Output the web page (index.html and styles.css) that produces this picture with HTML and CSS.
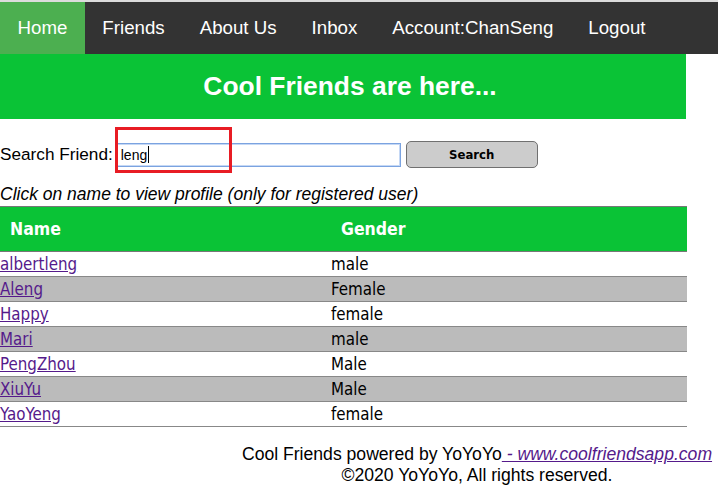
FILE: index.html
```html
<!DOCTYPE html>
<html>
<head>
<meta charset="utf-8">
<link rel="stylesheet" href="styles.css">
</head>
<body>
<ul class="nav">
  <li class="nav-item active">Home</li>
  <li class="nav-item">Friends</li>
  <li class="nav-item">About Us</li>
  <li class="nav-item">Inbox</li>
  <li class="nav-item">Account:ChanSeng</li>
  <li class="nav-item">Logout</li>
</ul>
<div class="banner"><h1 class="banner-title">Cool Friends are here...</h1></div>
<div class="search">
  <label class="search-label">Search Friend:</label>
  <div class="search-input">leng<span class="caret"></span></div>
  <button class="search-btn">Search</button>
  <div class="highlight"></div>
</div>
<p class="hint">Click on name to view profile (only for registered user)</p>
<table class="friends">
  <thead>
    <tr><th class="col-name">Name</th><th>Gender</th></tr>
  </thead>
  <tbody>
    <tr><td><a href="#">albertleng</a></td><td>male</td></tr>
    <tr class="alt"><td><a href="#">Aleng</a></td><td>Female</td></tr>
    <tr><td><a href="#">Happy</a></td><td>female</td></tr>
    <tr class="alt"><td><a href="#">Mari</a></td><td>male</td></tr>
    <tr><td><a href="#">PengZhou</a></td><td>Male</td></tr>
    <tr class="alt"><td><a href="#">XiuYu</a></td><td>Male</td></tr>
    <tr><td><a href="#">YaoYeng</a></td><td>female</td></tr>
  </tbody>
</table>
<footer class="footer">
  <div>Cool Friends powered by YoYoYo<a href="#" class="footer-link"> - www.coolfriendsapp.com</a></div>
  <div>©2020 YoYoYo, All rights reserved.</div>
</footer>
</body>
</html>
```

FILE: styles.css
```css
html, body {
  margin: 0;
  padding: 0;
  background: #fff;
}
body {
  font-family: "Liberation Sans", Arial, sans-serif;
  color: #000;
  border-top: 2px solid #dcdcdc;
}
.nav {
  list-style: none;
  margin: 0;
  padding: 0;
  display: flex;
  background: #333;
  height: 52px;
}
.nav-item {
  color: #fff;
  font-size: 18.7px;
  line-height: 52px;
  padding: 0 17.5px;
}
.nav-item.active {
  background: #4caf50;
}
.banner {
  width: 686px;
  height: 65px;
  background: #0ac336;
  display: flex;
  align-items: center;
  justify-content: center;
}
.banner-title {
  margin: 0;
  color: #fff;
  font-size: 26.4px;
  font-weight: bold;
  padding-left: 14px;
}
.search {
  position: relative;
  display: flex;
  align-items: center;
  margin-top: 22px;
  height: 27px;
}
.search-label {
  font-size: 17.2px;
  margin-right: 3px;
}
.search-input {
  box-sizing: border-box;
  width: 285px;
  height: 24px;
  border: 1px solid #7ba3e0;
  box-shadow: 0 0 0 1px #c5d8f5 inset;
  font-family: "Liberation Sans", Arial, sans-serif;
  font-size: 14px;
  line-height: 22px;
  padding-left: 4px;
  display: flex;
  align-items: center;
}
.caret {
  display: inline-block;
  width: 1px;
  height: 17px;
  background: #000;
  margin-left: 1px;
}
.search-btn {
  box-sizing: border-box;
  margin-left: 5px;
  width: 132px;
  height: 27px;
  background: #cccccc;
  border: 1px solid #707070;
  border-radius: 5px;
  font-family: "DejaVu Sans Condensed", "DejaVu Sans", sans-serif;
  font-weight: bold;
  font-size: 13px;
  color: #000;
  padding: 0;
}
.highlight {
  position: absolute;
  left: 115px;
  top: -14px;
  width: 117px;
  height: 46px;
  box-sizing: border-box;
  border: 3px solid #e81c24;
}
.hint {
  margin: 15px 0 0;
  font-size: 17.5px;
  font-style: italic;
  line-height: 22px;
}
.friends {
  width: 687px;
  border-collapse: collapse;
  margin-top: 1px;
  font-family: "DejaVu Sans Condensed", "DejaVu Sans", sans-serif;
  font-size: 16.8px;
}
.friends th {
  background: #0ac336;
  color: #fff;
  text-align: left;
  font-size: 17.5px;
  font-weight: bold;
  height: 44px;
  padding: 0 0 0 10px;
  border-top: 1px solid #777;
  border-bottom: 1px solid #777;
}
.friends th.col-name {
  width: 321px;
}
.friends td {
  padding: 0;
  height: 24px;
  border-bottom: 1px solid #888;
}
.friends tr.alt td {
  background: #bbbbbb;
}
.friends a {
  color: #551a8b;
  text-decoration: underline;
}
.footer {
  margin-top: 17px;
  padding-left: 236px;
  text-align: center;
  font-size: 17.6px;
  line-height: 21px;
}
.footer-link {
  color: #551a8b;
  font-style: italic;
  text-decoration: underline;
}
```
